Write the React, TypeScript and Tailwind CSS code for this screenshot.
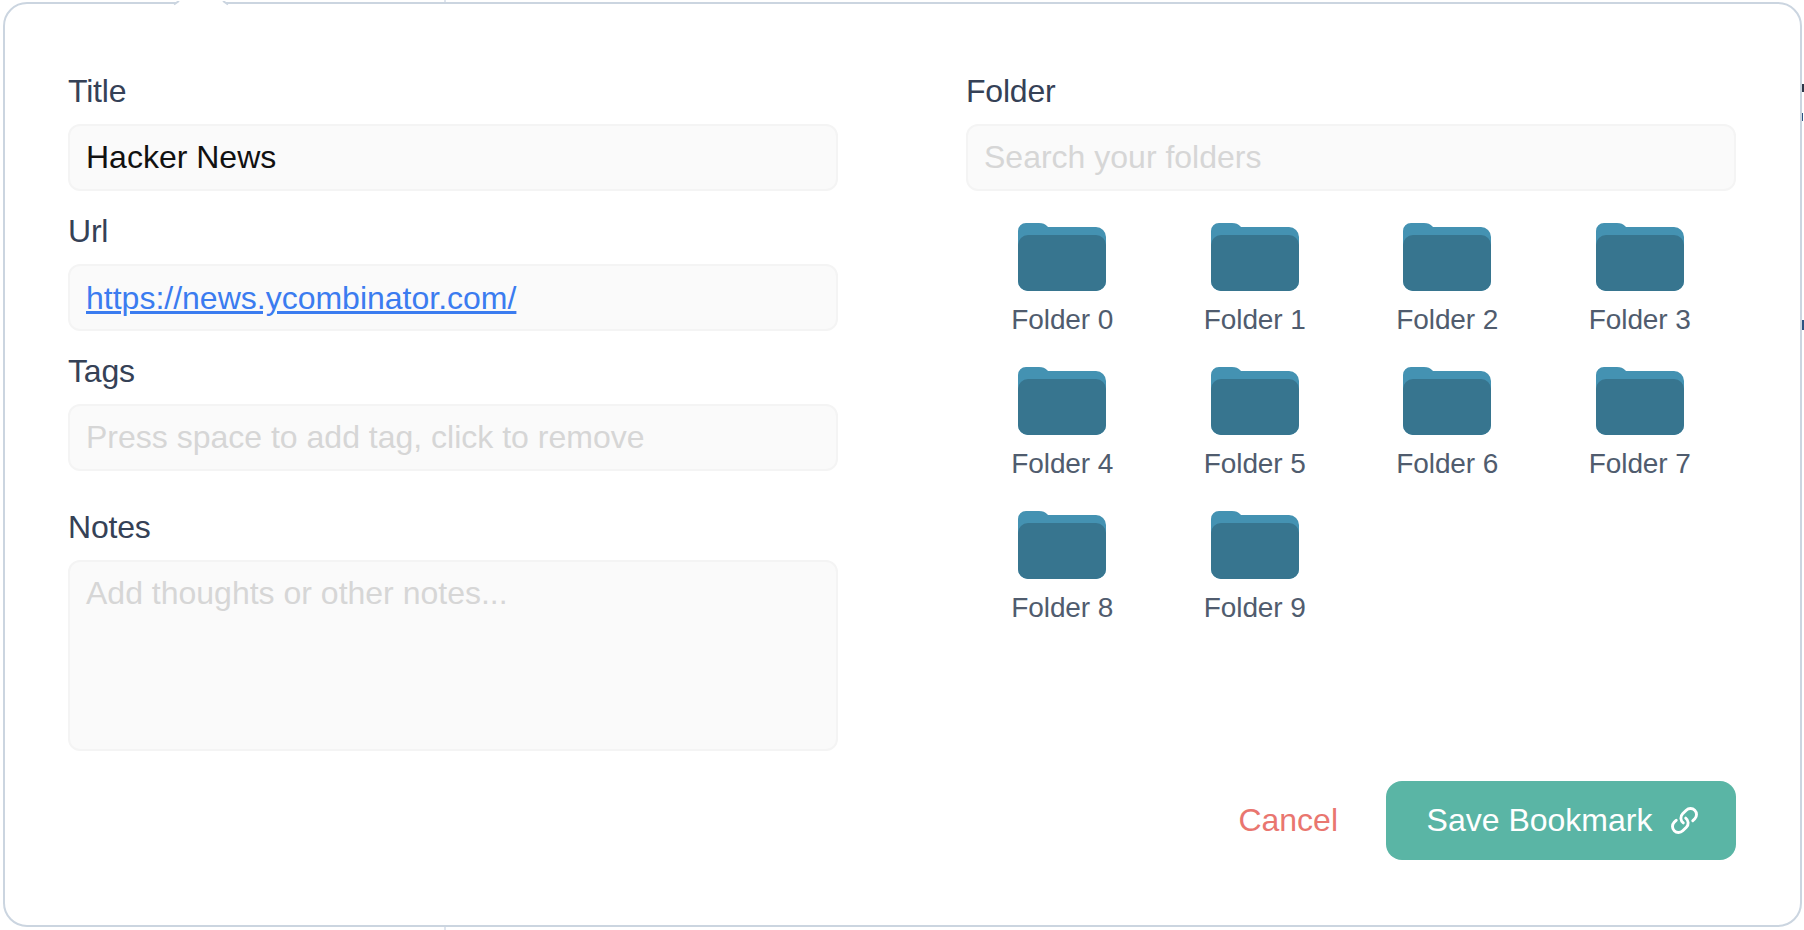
import { Link } from "lucide-react";

function FolderIcon() {
  return (
    <svg width="88" height="68" viewBox="0 0 88 68" fill="none">
      <path d="M0 8a8 8 0 0 1 8-8h13c4 0 6 1 8 3l1 1h48a10 10 0 0 1 10 10v44a10 10 0 0 1-10 10H10A10 10 0 0 1 0 58Z" fill="#4492b2" />
      <path d="M0 22a10 10 0 0 1 10-10h68a10 10 0 0 1 10 10v36a10 10 0 0 1-10 10H10A10 10 0 0 1 0 58Z" fill="#37758f" />
    </svg>
  );
}

function Label({ children, extra = "mt-[21px]" }: { children: string; extra?: string }) {
  return <label className={`block h-10 leading-[39px] mb-3 text-[32px] text-[#354156] tracking-[-0.2px] ${extra}`}>{children}</label>;
}

const field = "block w-full h-[67px] rounded-xl border-2 border-[#f4f4f4] bg-[#fafafa] px-[16px] text-[32px] text-[#111111] outline-none placeholder:text-[#d6d6d6]";

export default function App() {
  const folders = Array.from({ length: 10 }, (_, i) => `Folder ${i}`);
  return (
    <div className="relative w-[1804px] h-[930px] bg-white overflow-hidden pt-[2px] pl-[3px] font-['Liberation_Sans',Arial,sans-serif]">
      <div className="absolute left-[444px] top-0 h-[930px] w-[2px] bg-[#dfe5ee]" />
      <div className="absolute left-[1801px] top-[113px] h-[8px] w-[2px] bg-[#2c5282]" />
      <div className="absolute left-[1802px] top-[84px] h-[8px] w-[2px] bg-[#2d3748]" />
      <div className="absolute left-[1802px] top-[320px] h-[10px] w-[2px] bg-[#2c5282]" />
      <div className="relative w-[1799px] h-[925px] rounded-3xl border-2 border-[#cbd5e0] bg-white pl-[63px] pr-[64px] pt-[47px] pb-[65px] grid grid-cols-[770px_770px] gap-x-[128px]">
        <svg className="absolute left-[166px] top-[-3px]" width="60" height="9" viewBox="0 0 60 9" fill="none">
          <path d="M2 3h2l4-3h44l4 3h2v3H2Z" fill="#ffffff" />
          <path d="M3 3.5 8 0M57 3.5 52 0" stroke="#cbd5e0" strokeWidth="2" />
        </svg>
        <div>
          <Label>Title</Label>
          <input className={field} readOnly value="Hacker News" />
          <Label>Url</Label>
          <input className={`${field} !text-[#3b7cf0] underline pt-[2px]`} readOnly value="https://news.ycombinator.com/" />
          <Label>Tags</Label>
          <input className={field} readOnly placeholder="Press space to add tag, click to remove" />
          <Label extra="mt-[37px]">Notes</Label>
          <textarea className={`${field} !h-[191px] pt-[7px] resize-none`} readOnly placeholder="Add thoughts or other notes..." />
        </div>
        <div className="flex flex-col">
          <Label>Folder</Label>
          <input className={field} readOnly placeholder="Search your folders" />
          <div className="mt-8 grid grid-cols-4">
            {folders.map((f) => (
              <div key={f} className="flex flex-col items-center h-36">
                <FolderIcon />
                <span className="mt-[11px] h-9 leading-9 text-[28px] text-[#505c6e] tracking-[-0.1px]">{f}</span>
              </div>
            ))}
          </div>
          <div className="mt-auto flex items-center justify-end">
            <button className="mr-[48px] pb-[2px] text-[32px] text-[#e9766f]">Cancel</button>
            <button className="flex items-center justify-center gap-[18px] w-[350px] h-[79px] pl-[4px] rounded-2xl bg-[#5ab5a5] text-[32px] text-white">
              <span className="pb-[2px]">Save Bookmark</span>
              <Link size={29} strokeWidth={2.4} className="-scale-x-100 rotate-90" />
            </button>
          </div>
        </div>
      </div>
    </div>
  );
}
